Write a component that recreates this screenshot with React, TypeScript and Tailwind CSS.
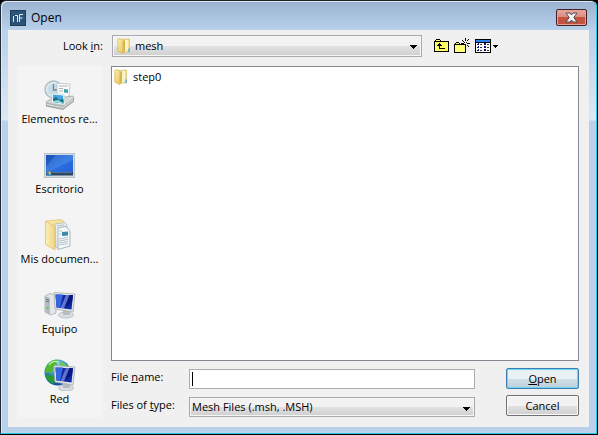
import React, { useState } from 'react';

const FolderIcon = () => (
  <svg width="14" height="16" viewBox="0 0 14 16" aria-hidden="true">
    <defs>
      <linearGradient id="folderFront" x1="0" x2="1" y1="0" y2="1">
        <stop offset="0" stopColor="#fbefb0" />
        <stop offset="1" stopColor="#e6c65c" />
      </linearGradient>
    </defs>
    <path d="M5 1.5L12.5 1V14H5Z" fill="#f3df93" stroke="#dcc272" strokeWidth="0.8" />
    <path d="M8 2H11V12L8 14Z" fill="#fbf3c8" />
    <path d="M0.8 1.2L3.5 0.7L6 2.2V15.5L0.8 13.2Z" fill="url(#folderFront)" stroke="#d9bb60" strokeWidth="0.8" />
    <path d="M6.3 3L8 2.2V13.5L6.3 15Z" fill="#d3b04c" />
    <path d="M11.2 10.5H13V14H11.2Z" fill="#67b6dc" />
  </svg>
);

const RecentIcon = () => (
  <svg width="32" height="32" viewBox="0 0 32 32" aria-hidden="true">
    <circle cx="9.5" cy="10.5" r="8.500" fill="#dde8ee" stroke="#b0bdc4" strokeWidth="1.4" />
    <circle cx="9.5" cy="10.5" r="5.800" fill="#c7dce7" />
    <path d="M9.5 5V11H14" fill="none" stroke="#73858e" strokeWidth="1.3" />
    <path d="M13 4L26 5L25 19L13 18Z" fill="#fafcfc" stroke="#b3bcc0" strokeWidth="0.8" />
    <path d="M15 7H24M15 9.5H19M15 12H19" stroke="#aab5b9" />
    <path d="M20 10L24 10.5V14L20 13.5Z" fill="#439ea8" />
    <path d="M2 23L8 19.5L29 17L30 20L20 27L2 24Z" fill="#d6dad9" stroke="#a2a8a7" strokeWidth="0.8" />
    <path d="M2 24L19 27L30 19V22.5L19 31L2 27.5Z" fill="#a5aaa9" />
    <path d="M3 25.5L19 28.5L29 21" fill="none" stroke="#e9eceb" />
    <path d="M8 14L20 15.5L21 26L8 24Z" fill="#fff" stroke="#c3d0d5" strokeWidth="0.7" />
    <path d="M9 15.5L19 16.5L19.5 24.5L9 23Z" fill="#3fa5e6" />
    <path d="M9 20L12 18L15 21L19.5 20V24.5L9 23Z" fill="#167179" />
    <path d="M9 22L14 21L19.5 24V24.5L9 23Z" fill="#96dce8" />
  </svg>
);

const DesktopIcon = () => (
  <svg width="32" height="32" viewBox="0 0 32 32" aria-hidden="true">
    <defs>
      <linearGradient id="desk" x1="0" x2="1" y1="0" y2="1">
        <stop offset="0" stopColor="#174fb0" />
        <stop offset="0.5" stopColor="#2b6fdd" />
        <stop offset="1" stopColor="#2460d6" />
      </linearGradient>
    </defs>
    <rect x="0.5" y="4.5" width="30" height="24" fill="#d4dde2" stroke="#b7c2c9" />
    <rect x="2" y="6" width="27" height="20" fill="url(#desk)" />
    <path d="M12 6H29V11L6 22H2V18Z" fill="#6ba6f4" opacity="0.3" />
    <rect x="2" y="23" width="27" height="3.5" fill="#2b4763" />
    <path d="M8 23.5H28" stroke="#6a8aa8" strokeWidth="0.7" />
    <circle cx="5" cy="24" r="2.6" fill="#1f85b8" />
    <path d="M3.5 22.5H5V24H3.5Z" fill="#f07b3d" />
    <path d="M5 22.5H6.5V24H5Z" fill="#9fdc5d" />
    <path d="M5 24H6.5V25.5H5Z" fill="#f3dc57" />
  </svg>
);

const DocumentsIcon = () => (
  <svg width="32" height="32" viewBox="0 0 32 32" aria-hidden="true">
    <defs>
      <linearGradient id="docs" x1="0" x2="1" y1="0" y2="0">
        <stop offset="0" stopColor="#fdf0b4" />
        <stop offset="1" stopColor="#f0d486" />
      </linearGradient>
    </defs>
    <path d="M2 2L17 0.5L20 2.5V24L10 28Z" fill="#f7e3a0" stroke="#dfc67c" strokeWidth="0.8" />
    <path d="M11 5L21 3.5L23 6V26L12 29Z" fill="#e6edf0" stroke="#b2bdc2" strokeWidth="0.8" />
    <path d="M14 9L22 7.5L26 12V27L14 30.5Z" fill="#f4f8f9" stroke="#9aa7ac" strokeWidth="0.8" />
    <path d="M13 7L20 6M15 12H18M15 15H17M15 20L24 18.5M15 22L24 20.5M15 24L24 22.5M15 26L24 24.5" stroke="#a8b5ba" strokeWidth="0.8" />
    <path d="M18 13L24 12.5V16.5L18 17Z" fill="#398cae" />
    <path d="M1.5 2L11 7.5V31L1.5 25.5Z" fill="url(#docs)" stroke="#dcc074" strokeWidth="0.8" />
  </svg>
);

// The monitor is shared by the computer and the network icons
const Monitor = () => (
  <>
    <ellipse cx="22" cy="26" rx="7.5" ry="3" fill="#dcdfe2" stroke="#a9b0b4" strokeWidth="0.7" />
    <path d="M19 20H26V26H19Z" fill="#b5bcc2" />
    <path d="M10 3.5L31 5L29 23L11 20Z" fill="#e1e5e7" stroke="#a6adb1" strokeWidth="0.8" />
    <path d="M11.500 5.500L29 6.500L27.500 20.500L12.500 18.500Z" fill="#1029a9" />
    <path d="M11.500 5.500H19L16 19L12.500 18.500Z" fill="#3767df" />
    <path d="M22 6H29L28 13L20 19.500Z" fill="#0a1780" />
    <path d="M22 6H25.500L20 19.500L16.500 19Z" fill="#93abf4" opacity="0.6" />
  </>
);

const ComputerIcon = () => (
  <svg width="32" height="32" viewBox="0 0 32 32" aria-hidden="true">
    <path d="M1 7L6 4.5L12 6V24L7 26L1 23Z" fill="#e3e6e8" stroke="#a4aaad" strokeWidth="0.8" />
    <path d="M1 7L6 9V26L1 23Z" fill="#b3bdc2" />
    <path d="M2 10L5 11M2 12L5 13" stroke="#66757e" />
    <circle cx="3.500" cy="19" r="1.300" fill="#63ce56" />
    <Monitor />
  </svg>
);

const NetworkIcon = () => (
  <svg width="32" height="32" viewBox="0 0 32 32" aria-hidden="true">
    <defs>
      <radialGradient id="globe" cx="0.45" cy="0.25" r="0.75">
        <stop offset="0" stopColor="#a2e1fa" />
        <stop offset="0.5" stopColor="#2b8bc9" />
        <stop offset="1" stopColor="#124f99" />
      </radialGradient>
    </defs>
    <circle cx="13.500" cy="13.500" r="13" fill="url(#globe)" />
    <path d="M2 8C5 2 10 0 14 1L12 4L14 6L10 9L7 15L4 13L1 15Z" fill="#52b836" />
    <path d="M4 16L10 17L12 21L9 25C5 23 2 20 1 16Z" fill="#2a9b2f" />
    <path d="M17 2C21 4 23 6 24 9L19 10L16 6Z" fill="#6dc94a" />
    <path d="M5 6C8 2 12 2 15 3" fill="none" stroke="#d0f4a6" strokeWidth="1.200" />
    <g transform="translate(0 3)">
      <Monitor />
    </g>
  </svg>
);

const UpFolderIcon = () => (
  <svg width="15" height="14" viewBox="0 0 15 14" shapeRendering="crispEdges" aria-hidden="true">
    <path d="M1 2H2V1H6V2H7V3H14V12H1Z" fill="#ffff66" />
    <path d="M2 0H6V1H2ZM1 1H2V2H1ZM6 1H7V2H6ZM0 2H15V13H0ZM1 3V12H14V3Z" fill="#000" fillRule="evenodd" />
    <path d="M5 4H6V5H7V6H8V7H6V9H11V10H5V7H3V6H4V5H5Z" fill="#000" />
  </svg>
);

const NewFolderIcon = () => (
  <svg width="16" height="16" viewBox="0 0 16 16" shapeRendering="crispEdges" aria-hidden="true">
    <path d="M1 6H2V5H5V6H11V14H1Z" fill="#ffff77" />
    <path d="M2 4H5V5H2ZM1 5H2V6H1ZM5 5H6V6H5ZM0 6H12V15H0ZM1 7V14H11V7Z" fill="#000" fillRule="evenodd" />
    <path d="M11 0H12V3H11ZM11 6H12V8H11ZM8 2H9V3H8ZM9 3H10V4H9ZM14 1H15V2H14ZM13 2H14V3H13ZM7 5H10V6H7ZM13 5H16V6H13ZM13 7H14V8H13ZM14 8H15V9H14ZM10 4H11V5H10ZM12 4H13V5H12Z" fill="#000" />
  </svg>
);

const ViewIcon = () => (
  <svg width="23" height="14" viewBox="0 0 23 14" shapeRendering="crispEdges" aria-hidden="true">
    <path d="M0 0H16V14H0Z" fill="#000" />
    <path d="M1 1H15V3H1Z" fill="#2484ee" />
    <path d="M1 4H15V13H1Z" fill="#fff" />
    <path d="M3 4H4V6H2V5H3ZM9 4H11V6H9ZM3 7H4V9H2V8H3ZM9 7H11V9H9ZM3 10H4V12H2V11H3ZM9 10H11V12H9Z" fill="#11117c" />
    <path d="M5 5H7V6H5ZM12 5H14V6H12ZM5 8H7V9H5ZM12 8H14V9H12ZM5 11H7V12H5ZM12 11H14V12H12Z" fill="#333" />
    <path d="M18 6H23V7H22V8H21V9H20V8H19V7H18Z" fill="#000" />
  </svg>
);

const Arrow = () => (
  <svg className="pointer-events-none absolute right-[5px] top-[10px]" width="7" height="4" viewBox="0 0 7 4" shapeRendering="crispEdges" aria-hidden="true">
    <path d="M0 0H7V1H6V2H5V3H4V4H3V3H2V2H1V1H0Z" fill="#000" />
  </svg>
);

const places = [
  { label: 'Elementos re...', icon: <RecentIcon /> },
  { label: 'Escritorio', icon: <DesktopIcon /> },
  { label: 'Mis documen...', icon: <DocumentsIcon /> },
  { label: 'Equipo', icon: <ComputerIcon /> },
  { label: 'Red', icon: <NetworkIcon /> },
];

const selectClass =
  'w-full appearance-none border border-[#a8a8ae] bg-linear-to-b from-[#f2f2f2] from-50% via-[#e2e2e2] via-50% to-[#cfcfcf] outline-none shadow-[inset_0_0_0_1px_#f6f6f6]';

const App = () => {
  const [fileName, setFileName] = useState('');

  return (
    <div className="bg-black pb-px pr-px font-['Open_Sans',sans-serif] text-[11px] leading-4 text-black">
      <div className="rounded-t-md border border-b-[#28c8e0] border-l-[#202b35] border-r-[#28c8e0] border-t-[#202020] bg-[linear-gradient(#98b2d0,#b9d1ea_30px,#dbe8f5_119px,#b9d1ea_120px)] px-[7px] pb-[6px] shadow-[inset_1px_1px_0_#dceaf6]">
        <header className="flex h-[29px] items-center pt-[5px]">
          <svg className="ml-[2px]" width="16" height="16" viewBox="0 0 16 16" aria-hidden="true">
            <rect width="16" height="16" fill="#2b5377" />
            <rect x="0.5" y="0.5" width="15" height="15" fill="none" stroke="#1f3d5c" />
            <path d="M3.5 12V6M5 5.5H7.5V12M9.5 12V4.5H13M9.500 8H12.5" fill="none" stroke="#e6eef4" />
          </svg>
          <h1 className="ml-[5px] text-xs">Open</h1>
          <button
            aria-label="Close"
            className="mb-[2px] ml-auto mr-[2px] flex h-[17px] w-[31px] items-center justify-center rounded-xs border border-[#43202a] bg-linear-to-b from-[#e5a79e] from-0% via-[#d98a7d] via-50% to-[#c4523f] to-50% shadow-[inset_0_0_0_1px_#e3a398]"
          >
            <svg width="13" height="11" viewBox="0 0 13 11" aria-hidden="true">
              <path d="M1 1H5L6.5 3L8 1H12L8.8 5.5L12 10H8L6.5 8L5 10H1L4.2 5.5Z" fill="#f5f5f5" stroke="#554b59" strokeWidth="1" />
            </svg>
          </button>
        </header>

        <main className="bg-[#f0f0f0] pb-[10px] pl-[10px] pr-[10px] pt-[5px]">
          <div className="flex items-center">
            <label htmlFor="lookIn" className="w-[85px] text-right">
              Look <u>i</u>n:
            </label>
            <div className="relative ml-[9px] flex-1">
              <select id="lookIn" className={`${selectClass} block h-[22px] pl-[22px]`}>
                <option>mesh</option>
              </select>
              <span className="pointer-events-none absolute left-[5px] top-[3px]">
                <FolderIcon />
              </span>
              <Arrow />
            </div>
            <div className="flex w-[157px] items-center gap-[5px] pl-3">
              <button aria-label="Up one level"><UpFolderIcon /></button>
              <button aria-label="Create new folder"><NewFolderIcon /></button>
              <button aria-label="View menu"><ViewIcon /></button>
            </div>
          </div>

          <div className="mt-[9px] flex gap-2">
            <nav className="flex w-[85px] shrink-0 flex-col gap-[22px] bg-[#f4f4f4] pr-[2px] pt-[13px]">
              {places.map(place => (
                <button key={place.label} className="flex flex-col items-center whitespace-nowrap">
                  {place.icon}
                  <span>{place.label}</span>
                </button>
              ))}
            </nav>

            <div className="flex-1">
              <ul className="h-[295px] border border-[#828790] bg-white pl-[2px] pt-[2px]">
                <li className="flex items-center gap-[5px]">
                  <FolderIcon />
                  step0
                </li>
              </ul>

              <form className="mt-[7px] flex gap-[31px]" onSubmit={e => e.preventDefault()}>
                <div className="flex flex-1 flex-col gap-2 pt-px">
                  <div className="flex">
                    <label htmlFor="fileName" className="w-[78px]">
                      File <u>n</u>ame:
                    </label>
                    <div className="relative flex-1">
                      <input
                        id="fileName"
                        value={fileName}
                        onChange={e => setFileName(e.target.value)}
                        className="block h-5 w-full border border-[#abadb3] bg-white px-[2px] caret-transparent outline-none"
                      />
                      <span className="pointer-events-none absolute left-[3px] top-[3px] h-[14px] w-px bg-black" />
                    </div>
                  </div>
                  <div className="flex">
                    <label htmlFor="fileType" className="w-[78px]">
                      Files of <u>t</u>ype:
                    </label>
                    <div className="relative flex-1">
                      <select id="fileType" className={`${selectClass} block h-5 pl-[2px]`}>
                        <option>Mesh Files (.msh, .MSH)</option>
                      </select>
                      <Arrow />
                    </div>
                  </div>
                </div>
                <div className="flex w-[73px] flex-col gap-[6px]">
                  <button
                    type="submit"
                    className="h-[21px] rounded-xs border border-[#3c7fb1] bg-linear-to-b from-[#e9f1f5] from-50% via-[#d3e1e8] via-50% to-[#bdd0da] shadow-[inset_0_0_0_1px_#70d3f5]"
                  >
                    <u>O</u>pen
                  </button>
                  <button
                    type="button"
                    className="h-[21px] rounded-xs border border-[#707070] bg-linear-to-b from-[#f2f2f2] from-50% via-[#e2e2e2] via-50% to-[#cfcfcf] shadow-[inset_0_0_0_1px_#fafafa]"
                  >
                    Cancel
                  </button>
                </div>
              </form>
            </div>
          </div>
        </main>
      </div>
    </div>
  );
};

export default App;
